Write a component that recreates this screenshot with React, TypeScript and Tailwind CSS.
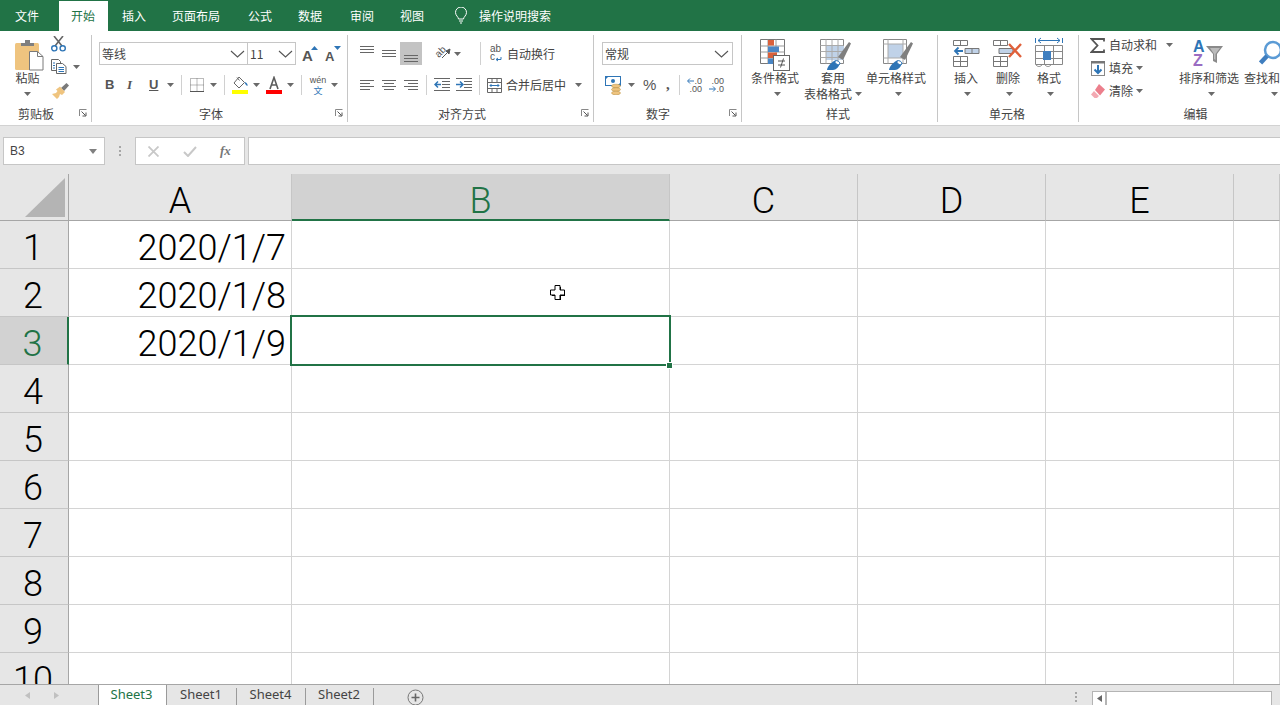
import React from "react";

const CJK = "font-['Noto_Sans_CJK_SC','Noto_Sans',sans-serif]";

function Caret({ className = "" }: { className?: string }) {
  return (
    <svg width="7" height="4" viewBox="0 0 7 4" className={"shrink-0 " + className}>
      <path d="M0 0h7L3.5 4z" fill="#6a6a6a" />
    </svg>
  );
}

function Chevron() {
  return (
    <svg width="15" height="8" viewBox="0 0 15 8" className="shrink-0">
      <path d="M1 1l6.5 6L14 1" fill="none" stroke="#555" strokeWidth="1.1" />
    </svg>
  );
}

function Launcher() {
  return (
    <svg width="8" height="8" viewBox="0 0 8 8" className="absolute right-[4px] top-[5px]">
      <path d="M.5 7V.5H7.5" fill="none" stroke="#888" />
      <path d="M2.5 2.5L6.5 6.5M7 3.5V7H3.5" fill="none" stroke="#555" />
    </svg>
  );
}

function Sep() {
  return <div className="w-px h-[87px] mt-[4px] bg-[#c6c6c6] shrink-0" />;
}

function VSep({ ml, mr }: { ml: string; mr?: string }) {
  return <div className={"w-px h-[20px] bg-[#d0d0d0] shrink-0 " + ml + " " + (mr ?? "")} />;
}

function Label({ text, pad }: { text: string; pad: string }) {
  return (
    <div className={"relative h-[20px] flex justify-center items-center text-[12px] text-[#444] " + pad}>
      <span>{text}</span>
    </div>
  );
}

function Paste() {
  return (
    <svg width="29" height="31" viewBox="0 0 29 31">
      <rect x="0" y="3" width="24" height="27" rx="1.5" fill="#efc47f" />
      <path d="M6 6V3h4V0h5v3h4v3z" fill="#7f7f7f" />
      <path d="M14.5 11.5h8l5.5 5v13.5h-13.5z" fill="#fff" stroke="#7a7a7a" />
      <path d="M22.5 11.5v5h5.5" fill="none" stroke="#7a7a7a" />
    </svg>
  );
}

function Scissors() {
  return (
    <svg width="15" height="16" viewBox="0 0 15 16">
      <path d="M3 0l8 10M12 0L4 10" stroke="#666" strokeWidth="1.6" fill="none" />
      <circle cx="3.3" cy="12.3" r="2.6" fill="none" stroke="#2e75b6" strokeWidth="1.4" />
      <circle cx="11.7" cy="12.3" r="2.6" fill="none" stroke="#2e75b6" strokeWidth="1.4" />
    </svg>
  );
}

function Copy() {
  return (
    <svg width="16" height="15" viewBox="0 0 16 15">
      <path d="M.5.5h7l2 2v9H.5z" fill="#fff" stroke="#666" />
      <path d="M5.5 4.5h6l3.5 3v7H5.5z" fill="#fff" stroke="#666" />
      <path d="M2 4h2M2 6.5h2M2 9h2" stroke="#2e75b6" />
      <path d="M7.5 8.5h5.5M7.5 10.5h5.5M7.5 12.5h5.5" stroke="#2e75b6" />
    </svg>
  );
}

function Brush() {
  return (
    <svg width="17" height="16" viewBox="0 0 17 16">
      <path d="M9 5l3 3 5-5.500L14.500 0z" fill="#7a7a7a" />
      <path d="M8 3.500L13 9l-3 3-2-1-1 3-2 2-5-5 4-1 1.500-2L4 6.500z" fill="#efc47f" />
    </svg>
  );
}

function Grow({ up }: { up: boolean }) {
  return (
    <span className="relative flex w-[16px] h-[20px] items-end justify-start text-[#555] font-['Liberation_Sans',sans-serif] font-bold">
      <span className={up ? "text-[15px] leading-[16px]" : "text-[13px] leading-[14px]"}>A</span>
      <svg width="7" height="4" viewBox="0 0 7 4" className="absolute right-0 top-[2px]">
        <path d={up ? "M0 4h7L3.500 0z" : "M0 0h7L3.500 4z"} fill="#2e75b6" />
      </svg>
    </span>
  );
}

function Borders() {
  return (
    <svg width="14" height="14" viewBox="0 0 14 14">
      <path d="M.5.5h13v13H.5zM7 .5v13M.5 7h13" fill="none" stroke="#777" strokeDasharray="1 1" />
      <path d="M0 13.500h14" stroke="#555" />
    </svg>
  );
}

function Fill() {
  return (
    <svg width="17" height="18" viewBox="0 0 17 18">
      <path d="M7 1l5.500 5.500L7 12 2 7z" fill="#fff" stroke="#666" />
      <path d="M12.500 6c2 .5 3.500 2 3 4-1.500-.5-2.500-2-3-4z" fill="#2e75b6" />
      <path d="M5 1.500l2.500 3" stroke="#666" />
      <rect x="0" y="14" width="16" height="4" fill="#ffff00" />
    </svg>
  );
}

function FontColor() {
  return (
    <svg width="16" height="18" viewBox="0 0 16 18">
      <path d="M4 13L8 1.500 12 13M5.500 9h5" fill="none" stroke="#5c5c5c" strokeWidth="1.600" />
      <rect x="0" y="14" width="16" height="4" fill="#ff0000" />
    </svg>
  );
}

function Lines({ kind }: { kind: "l" | "c" | "r" }) {
  const d = {
    l: "M0 1.500h14M0 4.500h10M0 7.500h14M0 10.500h10",
    c: "M0 1.500h14M2 4.500h10M0 7.500h14M2 10.500h10",
    r: "M0 1.500h14M4 4.500h10M0 7.500h14M4 10.500h10",
  }[kind];
  return (
    <svg width="14" height="12" viewBox="0 0 14 12">
      <path d={d} stroke="#666" fill="none" />
    </svg>
  );
}

function VAlign({ y }: { y: number }) {
  return (
    <svg width="14" height="10" viewBox="0 0 14 10" style={{ marginTop: y }}>
      <path d="M0 1.500h14M0 4.500h14M0 7.500h14" stroke="#666" fill="none" />
    </svg>
  );
}

function Orient() {
  return (
    <span className="relative block w-[17px] h-[15px] text-[#555]">
      <span className="absolute left-[1px] top-[-1px] text-[10px] leading-[14px] rotate-[-45deg] font-['Liberation_Sans',sans-serif]">ab</span>
      <svg width="17" height="15" viewBox="0 0 17 15" className="absolute left-0 top-0">
        <path d="M8 12l6-6M16 3l-1 5-3-3z" stroke="#555" fill="#555" />
      </svg>
    </span>
  );
}

function Wrap() {
  return (
    <span className="relative flex flex-col w-[12px] h-[17px] text-[10px] leading-[8px] text-[#555] font-['Liberation_Sans',sans-serif]">
      <span>ab</span>
      <span>c</span>
      <svg width="12" height="17" viewBox="0 0 12 17" className="absolute left-0 top-0">
        <path d="M11 12v2.500H6.500M8 13l-2 1.500L8 16" stroke="#2e75b6" fill="none" />
      </svg>
    </span>
  );
}

function Indent({ dir }: { dir: "l" | "r" }) {
  return dir === "l" ? (
    <svg width="16" height="14" viewBox="0 0 16 14">
      <path d="M0 .5h16M8 3.500h8M8 6.500h8M8 9.500h8M0 12.500h16" stroke="#666" fill="none" />
      <path d="M7 6.500H1M4 3.500l-3 3 3 3" stroke="#2e75b6" strokeWidth="1.500" fill="none" />
    </svg>
  ) : (
    <svg width="16" height="14" viewBox="0 0 16 14">
      <path d="M0 .5h16M8 3.500h8M8 6.500h8M8 9.500h8M0 12.500h16" stroke="#666" fill="none" />
      <path d="M0 6.500h6M4 3.500l3 3-3 3" stroke="#2e75b6" strokeWidth="1.500" fill="none" />
    </svg>
  );
}

function Merge() {
  return (
    <svg width="15" height="15" viewBox="0 0 15 15">
      <path d="M.5.5h14v14H.5zM.5 4.500h14M.5 10.500h14M5 .5v4M10 .5v4M5 10.500v4M10 10.500v4" stroke="#666" fill="#fff" />
      <path d="M3 7.500h9M4.500 6l-1.500 1.500L4.500 9M10.500 6L12 7.500 10.500 9" stroke="#2e75b6" fill="none" />
    </svg>
  );
}

function Accounting() {
  return (
    <svg width="18" height="19" viewBox="0 0 18 19">
      <rect x=".5" y=".5" width="15" height="9" fill="#fff" stroke="#2e75b6" />
      <circle cx="8" cy="5" r="2" fill="#2e75b6" />
      <path d="M0 0h4L0 4zM16 10h-4l4-4z" fill="#2e75b6" />
      <ellipse cx="11" cy="10" rx="4.500" ry="1.800" fill="#efc47f" stroke="#b58a3a" strokeWidth=".5" />
      <ellipse cx="11" cy="13.500" rx="4.500" ry="1.800" fill="#efc47f" stroke="#b58a3a" strokeWidth=".5" />
      <ellipse cx="11" cy="17" rx="4.500" ry="1.800" fill="#efc47f" stroke="#b58a3a" strokeWidth=".5" />
    </svg>
  );
}

function Decimal({ more }: { more: boolean }) {
  return (
    <span className="relative flex flex-col items-end w-[15px] h-[16px] text-[9px] leading-[8px] text-[#555] font-['Liberation_Sans',sans-serif]">
      {more ? (
        <>
          <span>.0</span>
          <span>.00</span>
          <svg width="7" height="6" viewBox="0 0 7 6" className="absolute left-0 top-[1px]">
            <path d="M7 3H1M3 .5L.5 3 3 5.500" stroke="#2e75b6" fill="none" />
          </svg>
        </>
      ) : (
        <>
          <span>.00</span>
          <span>.0</span>
          <svg width="7" height="6" viewBox="0 0 7 6" className="absolute left-0 top-[9px]">
            <path d="M0 3h6M4 .5L6.500 3 4 5.500" stroke="#2e75b6" fill="none" />
          </svg>
        </>
      )}
    </span>
  );
}

function Cond() {
  return (
    <svg width="30" height="32" viewBox="0 0 30 32">
      <path d="M.5.5h24v24H.5z" fill="#fff" stroke="#777" />
      <path d="M8 .5v24M16 .5v24M.5 7h24M.5 13h24M.5 19h24" stroke="#999" fill="none" />
      <path d="M8 1h6v5.500H8z" fill="#d9603b" />
      <path d="M8 7.500h11V13H8z" fill="#4a86c5" />
      <path d="M8 13.500h9V19H8z" fill="#d9603b" />
      <path d="M8 19.500h5V25H8z" fill="#4a86c5" />
      <rect x="13.500" y="16.500" width="16" height="15" fill="#fff" stroke="#666" />
      <path d="M18 22h7M18 26h7M23.500 19.500l-3 9" stroke="#555" fill="none" />
    </svg>
  );
}

function TableFmt() {
  return (
    <svg width="31" height="32" viewBox="0 0 31 32">
      <path d="M.5.5h23v24H.5z" fill="#fff" stroke="#888" />
      <path d="M6 7h18v14H6z" fill="#c0d2e8" />
      <path d="M6 .5v24M12 .5v24M18 .5v24M.5 6.500h23M.5 12.500h23M.5 18.500h23" stroke="#aaa" fill="none" />
      <path d="M18 18L29 3l2 1.500L23 21z" fill="#7f7f7f" />
      <path d="M7 31c.5-4 4-7 7-9 2-1 5 0 6 2-1 4-4 7-7 7z" fill="#2e75b6" />
      <path d="M15 22a3.500 3.500 0 0 1 5 3l-2 1-3-2z" fill="#fff" stroke="#2e75b6" />
    </svg>
  );
}

function CellStyle() {
  return (
    <svg width="30" height="32" viewBox="0 0 30 32">
      <path d="M.5.5h23v24H.5z" fill="#fff" stroke="#888" />
      <path d="M5 5h15v14H5z" fill="#c0d2e8" />
      <path d="M.5 5h23M.5 19h23M5 .5v24M20 .5v24" stroke="#aaa" fill="none" />
      <path d="M17 18L28 3l2 1.500L22 21z" fill="#7f7f7f" />
      <path d="M6 31c.5-4 4-7 7-9 2-1 5 0 6 2-1 4-4 7-7 7z" fill="#2e75b6" />
      <path d="M14 22a3.500 3.500 0 0 1 5 3l-2 1-3-2z" fill="#fff" stroke="#2e75b6" />
    </svg>
  );
}

function Insert() {
  return (
    <svg width="27" height="27" viewBox="0 0 27 27">
      <path d="M.5.5h14v5H.5zM7.500.5v5M.5 16.500h14v10H.5zM7.500 16.500v10M.5 21.500h14" fill="#fff" stroke="#777" />
      <path d="M12 8.500h14v5H12z" fill="#c0d2e8" stroke="#777" />
      <path d="M19 8.500v5" stroke="#777" />
      <path d="M10 11H2M5.500 7.500L2 11l3.500 3.500" stroke="#2e75b6" strokeWidth="1.800" fill="none" />
    </svg>
  );
}

function Delete() {
  return (
    <svg width="30" height="27" viewBox="0 0 30 27">
      <path d="M.5.5h14v5H.5zM7.500.5v5M.5 16.500h14v10H.5zM7.500 16.500v10M.5 21.500h14" fill="#fff" stroke="#777" />
      <path d="M6 8.500h14v5H6z" fill="#c0d2e8" stroke="#777" />
      <path d="M16 4l12 13M28 4L16 17" stroke="#e0603a" strokeWidth="2.400" fill="none" />
    </svg>
  );
}

function Format() {
  return (
    <svg width="28" height="31" viewBox="0 0 28 31">
      <path d="M.5 1v5M27.500 1v5M3 3.500h22M6 1l-3 2.500L6 6M22 1l3 2.500L22 6" stroke="#2e75b6" fill="none" />
      <path d="M.5 8.500h27v19H.5zM9.500 8.500v19M18.500 8.500v19M.5 14.500h27M.5 21.500h27" fill="#fff" stroke="#888" />
      <rect x="8" y="14" width="8" height="9" fill="#3f7ebf" />
      <path d="M1 28c2 2 4 2 6 0M10 28c2 2 4 2 6 0" stroke="#888" fill="none" />
    </svg>
  );
}

function Sigma() {
  return (
    <svg width="15" height="15" viewBox="0 0 15 15" className="shrink-0">
      <path d="M14 3.500V1H1.500l6 6.500-6 6.500H14v-2.500" fill="none" stroke="#555" strokeWidth="1.800" />
    </svg>
  );
}

function FillDown() {
  return (
    <svg width="14" height="15" viewBox="0 0 14 15" className="shrink-0">
      <rect x=".5" y=".5" width="13" height="14" fill="#fff" stroke="#888" />
      <path d="M0 0h14v2.500H0z" fill="#777" />
      <path d="M7 4v8M3.500 8.500L7 12l3.500-3.500" stroke="#2e75b6" strokeWidth="2" fill="none" />
    </svg>
  );
}

function Eraser() {
  return (
    <svg width="14" height="14" viewBox="0 0 14 14" className="shrink-0">
      <path d="M8 0l6 5.500-5 6L4 6z" fill="#ec7f8c" />
      <path d="M3 7l5 5-2 2H3.500L0 10.500z" fill="#f3a9b2" />
    </svg>
  );
}

function Sort() {
  return (
    <span className="relative flex flex-col w-[31px] h-[28px] font-['Liberation_Sans',sans-serif] font-bold text-[16px] leading-[14px]">
      <span className="text-[#2e75b6]">A</span>
      <span className="text-[#9a6cc2]">Z</span>
      <svg width="31" height="28" viewBox="0 0 31 28" className="absolute left-0 top-0">
        <path d="M13 6h17l-6 8v9l-4-2v-7z" fill="#8a8a8a" />
        <path d="M17 8h10l-4.500 6v6l-1.500-1v-5z" fill="#bbb" />
      </svg>
    </span>
  );
}

function Find() {
  return (
    <svg width="22" height="32" viewBox="0 0 22 32">
      <circle cx="14" cy="11" r="8" fill="#fff" stroke="#5b9bd5" strokeWidth="2.500" />
      <path d="M8 17L1.500 24" stroke="#3f7ebf" strokeWidth="4.500" />
    </svg>
  );
}

function BigButton({
  w,
  ml,
  icon,
  line1,
  line2,
  caretShift,
  textClass,
  iconClass,
}: {
  w: string;
  ml: string;
  icon: React.ReactNode;
  line1: string;
  line2?: React.ReactNode;
  caretShift?: string;
  textClass?: string;
  iconClass?: string;
}) {
  return (
    <div className={"flex flex-col items-center shrink-0 " + w + " " + ml}>
      <div className={"h-[31px] flex items-start justify-center " + (iconClass ?? "")}>{icon}</div>
      <div className={"text-[12px] leading-[16px] text-[#444] whitespace-nowrap " + (textClass ?? "")}>{line1}</div>
      {line2 ?? <Caret className={"mt-[6px] " + (caretShift ?? "")} />}
    </div>
  );
}

function Ribbon() {
  return (
    <div className={"h-[94px] bg-white flex border-b border-[#d2d2d2] box-content shrink-0 " + CJK}>
      {/* clipboard */}
      <div className="w-[91px] shrink-0 flex flex-col">
        <div className="h-[73px] flex">
          <div className="w-[51px] flex flex-col items-center pl-[2px]">
            <div className="mt-[9px] ml-[6px] h-[30px]">
              <Paste />
            </div>
            <div className="text-[12px] leading-[16px] text-[#444] ml-[2px]">粘贴</div>
            <Caret className="mt-[6px] ml-[2px]" />
          </div>
          <div className="flex flex-col pt-[5px]">
            <Scissors />
            <div className="flex items-center mt-[7px]">
              <Copy />
              <Caret className="ml-[6px]" />
            </div>
            <div className="mt-[9px] ml-[1px]">
              <Brush />
            </div>
          </div>
        </div>
        <div className="relative">
          <Label text="剪贴板" pad="pr-[19px]" />
          <Launcher />
        </div>
      </div>
      <Sep />
      {/* font */}
      <div className="w-[255px] shrink-0 flex flex-col">
        <div className="h-[73px] pt-[11px] pl-[7px]">
          <div className="flex items-center h-[23px]">
            <div className="w-[149px] h-[23px] border border-[#c6c6c6] flex items-center justify-between pl-[2px] pr-[2px] text-[12px] text-[#444]">
              <span>等线</span>
              <Chevron />
            </div>
            <div className="w-[49px] h-[23px] border border-[#c6c6c6] -ml-px flex items-center justify-between pl-[2px] pr-[2px] text-[12px] text-[#444]">
              <span>11</span>
              <Chevron />
            </div>
            <div className="ml-[6px]">
              <Grow up />
            </div>
            <div className="ml-[7px]">
              <Grow up={false} />
            </div>
          </div>
          <div className="flex items-center h-[20px] mt-[10px] font-['Liberation_Sans',sans-serif] text-[13px] text-[#555]">
            <span className="ml-[6px] w-[9px] font-bold">B</span>
            <span className="ml-[13px] w-[9px] italic font-['Liberation_Serif',serif] font-bold">I</span>
            <span className="ml-[13px] w-[9px] font-bold underline">U</span>
            <Caret className="ml-[9px]" />
            <VSep ml="ml-[7px]" />
            <div className="ml-[8px]">
              <Borders />
            </div>
            <Caret className="ml-[6px]" />
            <VSep ml="ml-[7px]" />
            <div className="ml-[7px]">
              <Fill />
            </div>
            <Caret className="ml-[4px]" />
            <div className="ml-[6px]">
              <FontColor />
            </div>
            <Caret className="ml-[5px]" />
            <VSep ml="ml-[7px]" />
            <div className="ml-[8px] flex flex-col items-center w-[16px] gap-[2px]">
              <span className="text-[9px] leading-[8px] text-[#555]">wén</span>
              <span className={"text-[9px] leading-[9px] text-[#2e75b6] " + CJK}>文</span>
            </div>
            <Caret className="ml-[5px]" />
          </div>
        </div>
        <div className="relative">
          <Label text="字体" pad="pr-[17px]" />
          <Launcher />
        </div>
      </div>
      <Sep />
      {/* alignment */}
      <div className="w-[245px] shrink-0 flex flex-col">
        <div className="h-[73px] pt-[11px] pl-[12px]">
          <div className="flex items-center h-[23px]">
            <div className="w-[14px] flex items-start h-[23px]">
              <VAlign y={3} />
            </div>
            <div className="w-[14px] ml-[8px] flex items-start h-[23px]">
              <VAlign y={7} />
            </div>
            <div className="w-[22px] h-[23px] ml-[4px] bg-[#c3c3c3] flex justify-center items-start">
              <VAlign y={12} />
            </div>
            <div className="ml-[12px]">
              <Orient />
            </div>
            <Caret className="ml-[3px]" />
            <div className="w-px h-[23px] bg-[#d0d0d0] ml-[19px]" />
            <div className="ml-[9px]">
              <Wrap />
            </div>
            <span className="ml-[5px] text-[12px] text-[#444]">自动换行</span>
          </div>
          <div className="flex items-center h-[20px] mt-[10px]">
            <div>
              <Lines kind="l" />
            </div>
            <div className="ml-[8px]">
              <Lines kind="c" />
            </div>
            <div className="ml-[8px]">
              <Lines kind="r" />
            </div>
            <VSep ml="ml-[8px]" />
            <div className="ml-[7px]">
              <Indent dir="l" />
            </div>
            <div className="ml-[6px]">
              <Indent dir="r" />
            </div>
            <div className="w-px h-[20px] bg-[#d0d0d0] ml-[7px]" />
            <div className="ml-[7px]">
              <Merge />
            </div>
            <span className="ml-[4px] text-[12px] text-[#444]">合并后居中</span>
            <Caret className="ml-[9px]" />
          </div>
        </div>
        <div className="relative">
          <Label text="对齐方式" pad="pr-[17px]" />
          <Launcher />
        </div>
      </div>
      <Sep />
      {/* number */}
      <div className="w-[147px] shrink-0 flex flex-col">
        <div className="h-[73px] pt-[11px] pl-[8px]">
          <div className="w-[131px] h-[23px] border border-[#c6c6c6] flex items-center justify-between pl-[2px] pr-[3px] text-[12px] text-[#444]">
            <span>常规</span>
            <Chevron />
          </div>
          <div className="flex items-center h-[20px] mt-[10px]">
            <div className="ml-[3px]">
              <Accounting />
            </div>
            <Caret className="ml-[5px]" />
            <span className="ml-[8px] w-[14px] text-[15px] font-['Liberation_Sans',sans-serif] text-[#555]">%</span>
            <span className="ml-[9px] w-[6px] text-[15px] font-['Liberation_Serif',serif] font-bold text-[#555] -mt-[2px]">,</span>
            <VSep ml="ml-[7px]" />
            <div className="ml-[7px]">
              <Decimal more />
            </div>
            <div className="ml-[7px]">
              <Decimal more={false} />
            </div>
          </div>
        </div>
        <div className="relative">
          <Label text="数字" pad="pr-[19px]" />
          <Launcher />
        </div>
      </div>
      <Sep />
      {/* styles */}
      <div className="w-[195px] shrink-0 flex flex-col">
        <div className="h-[73px] flex pt-[8px]">
          <BigButton w="w-[48px]" ml="ml-[9px]" icon={<Cond />} line1="条件格式" caretShift="ml-[4px]" />
          <BigButton
            w="w-[48px]"
            ml="ml-[5px]"
            icon={<TableFmt />}
            iconClass="ml-[14px]"
            line1="套用"
            textClass="ml-[10px]"
            line2={
              <div className="flex items-center text-[12px] leading-[16px] text-[#444] whitespace-nowrap">
                <span>表格格式</span>
                <Caret className="ml-[3px] -mr-[10px]" />
              </div>
            }
          />
          <BigButton w="w-[60px]" ml="ml-[14px]" icon={<CellStyle />} iconClass="ml-[4px]" line1="单元格样式" caretShift="ml-[4px]" />
        </div>
        <Label text="样式" pad="pr-[3px]" />
      </div>
      <Sep />
      {/* cells */}
      <div className="w-[140px] shrink-0 flex flex-col">
        <div className="h-[73px] flex pt-[8px]">
          <BigButton w="w-[28px]" ml="ml-[14px]" icon={<Insert />} iconClass="pt-[1px]" line1="插入" caretShift="ml-[3px]" />
          <BigButton w="w-[30px]" ml="ml-[13px]" icon={<Delete />} iconClass="pt-[1px]" line1="删除" caretShift="ml-[2px]" />
          <BigButton
            w="w-[28px]"
            ml="ml-[12px]"
            icon={
              <div className="-mt-[2px]">
                <Format />
              </div>
            }
            line1="格式"
            caretShift="ml-[2px]"
          />
        </div>
        <Label text="单元格" pad="pr-[2px]" />
      </div>
      <Sep />
      {/* editing */}
      <div className="w-[201px] shrink-0 flex flex-col overflow-hidden">
        <div className="h-[73px] flex pt-[6px]">
          <div className="w-[90px] pl-[11px] shrink-0 flex flex-col text-[12px] text-[#444] whitespace-nowrap">
            <div className="flex items-center h-[16px]">
              <Sigma />
              <span className="ml-[4px]">自动求和</span>
              <Caret className="ml-[9px]" />
            </div>
            <div className="flex items-center h-[16px] mt-[7px]">
              <div className="ml-[1px]">
                <FillDown />
              </div>
              <span className="ml-[4px]">填充</span>
              <Caret className="ml-[3px]" />
            </div>
            <div className="flex items-center h-[16px] mt-[7px]">
              <div className="ml-[1px]">
                <Eraser />
              </div>
              <span className="ml-[4px]">清除</span>
              <Caret className="ml-[3px]" />
            </div>
          </div>
          <div className="w-[60px] ml-[10px] shrink-0 flex flex-col items-center pt-[3px]">
            <div className="h-[30px] ml-[-1px]">
              <Sort />
            </div>
            <div className="text-[12px] leading-[16px] text-[#444] whitespace-nowrap">排序和筛选</div>
            <Caret className="mt-[6px] ml-[4px]" />
          </div>
          <div className="w-[36px] ml-[5px] shrink-0 flex flex-col pt-[2px]">
            <div className="h-[31px] ml-[15px]">
              <Find />
            </div>
            <div className="text-[12px] leading-[16px] text-[#444] whitespace-nowrap">查找和选择</div>
            <Caret className="mt-[6px] ml-[27px]" />
          </div>
        </div>
        <Label text="编辑" pad="pl-[32px]" />
      </div>
    </div>
  );
}

function FormulaBar() {
  return (
    <div className="h-[48px] bg-[#e6e6e6] flex pt-[11px] pl-[3px] items-start shrink-0 font-['Liberation_Sans',sans-serif]">
      <div className="w-[102px] h-[28px] bg-white border border-[#c6c6c6] flex items-center justify-between pl-[6px] pr-[7px] text-[12px] text-[#444]">
        <span>B3</span>
        <svg width="8" height="5" viewBox="0 0 8 5">
          <path d="M0 0h8L4 5z" fill="#808080" />
        </svg>
      </div>
      <div className="w-[30px] h-[28px] flex flex-col items-center justify-center gap-[2px]">
        <span className="w-[2px] h-[2px] bg-[#a6a6a6]" />
        <span className="w-[2px] h-[2px] bg-[#a6a6a6]" />
        <span className="w-[2px] h-[2px] bg-[#a6a6a6]" />
      </div>
      <div className="w-[110px] h-[28px] bg-white border border-[#c6c6c6] flex items-center">
        <svg width="11" height="11" viewBox="0 0 11 11" className="ml-[12px]">
          <path d="M.5.5l10 10M10.500.5l-10 10" stroke="#c8c8c8" strokeWidth="1.800" />
        </svg>
        <svg width="14" height="11" viewBox="0 0 14 11" className="ml-[24px]">
          <path d="M1 6l4 4 8-9" stroke="#c8c8c8" strokeWidth="2" fill="none" />
        </svg>
        <span className="ml-[23px] font-['Liberation_Serif',serif] italic font-bold text-[13px] text-[#777]">fx</span>
      </div>
      <div className="flex-1 h-[28px] ml-[3px] bg-white border border-[#c6c6c6] border-r-0" />
    </div>
  );
}

const COLS = [
  { name: "A", w: "w-[223px]" },
  { name: "B", w: "w-[378px]" },
  { name: "C", w: "w-[188px]" },
  { name: "D", w: "w-[188px]" },
  { name: "E", w: "w-[188px]" },
  { name: "", w: "flex-1" },
];

const DATA: Record<number, string> = { 1: "2020/1/7", 2: "2020/1/8", 3: "2020/1/9" };
const BIG = "font-['Roboto',sans-serif] font-light text-[36px] text-black";

function Grid() {
  return (
    <div className={"relative flex-1 overflow-hidden bg-white " + BIG}>
      <div className="flex h-[47px]">
        <div className="w-[69px] shrink-0 bg-[#e6e6e6] border-r border-b border-[#a6a6a6] flex items-end justify-end pr-[3px] pb-[3px]">
          <svg width="40" height="39" viewBox="0 0 40 39">
            <path d="M40 0v39H0z" fill="#b4b4b4" />
          </svg>
        </div>
        {COLS.map((c) => (
          <div
            key={c.name}
            className={
              c.w +
              " leading-[54px] text-center h-[47px] border-r " +
              (c.name === "B"
                ? "bg-[#d2d2d2] border-b-2 border-b-[#217346] border-r-[#c6c6c6] text-[#217346]"
                : "bg-[#e6e6e6] border-b border-b-[#a6a6a6] border-r-[#c6c6c6]")
            }
          >
            {c.name}
          </div>
        ))}
      </div>
      {[1, 2, 3, 4, 5, 6, 7, 8, 9, 10].map((r) => (
        <div key={r} className="flex h-[48px]">
          <div
            className={
              "w-[69px] shrink-0 border-b border-b-[#c6c6c6] text-center pr-[2px] leading-[55px] h-[48px] " +
              (r === 3
                ? "bg-[#d2d2d2] border-r-2 border-r-[#217346] text-[#217346]"
                : "bg-[#e6e6e6] border-r border-r-[#a6a6a6]")
            }
          >
            {r}
          </div>
          {COLS.map((c) => (
            <div
              key={c.name}
              className={c.w + " h-[48px] border-r border-b border-[#d4d4d4] text-right pr-[5px] leading-[55px]"}
            >
              {c.name === "A" ? DATA[r] : null}
            </div>
          ))}
        </div>
      ))}
      {/* selection */}
      <div className="absolute left-[290px] top-[141px] w-[381px] h-[51px] border-2 border-[#217346]" />
      <div className="absolute left-[666px] top-[188px] w-[5px] h-[5px] bg-[#217346] border border-white box-content" />
      {/* cursor */}
      <svg width="16" height="16" viewBox="0 0 16 16" className="absolute left-[550px] top-[111px]">
        <path d="M5 1h5v4h4v5h-4v4H5v-4H1V5h4z" fill="#000" transform="translate(1 1)" />
        <path d="M5 .5h5v4.500h4.500v5H10v4.500H5V10H.5V5H5z" fill="#fff" stroke="#000" />
      </svg>
    </div>
  );
}

function Tabs() {
  return (
    <div className="h-[21px] shrink-0 bg-[#e6e6e6] border-t border-[#a6a6a6] flex items-start font-['Noto_Sans',sans-serif] text-[13px] text-[#444]">
      <div className="w-[99px] h-[20px] flex items-center border-r border-[#9a9a9a] shrink-0">
        <svg width="5" height="7" viewBox="0 0 5 7" className="ml-[25px]">
          <path d="M5 0v7L0 3.500z" fill="#c0c0c0" />
        </svg>
        <svg width="5" height="7" viewBox="0 0 5 7" className="ml-[24px]">
          <path d="M0 0v7l5-3.500z" fill="#c0c0c0" />
        </svg>
      </div>
      <div className="w-[68px] h-[20px] pr-[2px] bg-white text-[#217346] flex items-center justify-center border-r border-[#9a9a9a] shrink-0">
        Sheet3
      </div>
      {[
        { t: "Sheet1", w: "w-[70px]" },
        { t: "Sheet4", w: "w-[69px]" },
        { t: "Sheet2", w: "w-[68px]" },
      ].map(({ t, w }) => (
        <div key={t} className={w + " h-[20px] pr-[2px] flex items-center justify-center shrink-0 relative"}>
          {t}
          <span className="absolute right-0 top-[3px] h-[17px] w-px bg-[#9a9a9a]" />
        </div>
      ))}
      <svg width="17" height="17" viewBox="0 0 17 17" className="ml-[33px] mt-[4px] shrink-0">
        <circle cx="8.500" cy="8.500" r="7.500" fill="none" stroke="#777" />
        <path d="M8.500 4.500v8M4.500 8.500h8" stroke="#666" strokeWidth="1.600" />
      </svg>
      <div className="ml-[651px] mt-[7px] flex flex-col gap-[2px] shrink-0">
        <span className="w-[2px] h-[2px] bg-[#a6a6a6]" />
        <span className="w-[2px] h-[2px] bg-[#a6a6a6]" />
        <span className="w-[2px] h-[2px] bg-[#a6a6a6]" />
      </div>
      <div className="ml-[15px] mt-[6px] w-[180px] h-[15px] bg-white border border-[#b4b4b4] flex shrink-0">
        <div className="w-[14px] flex items-center justify-center border-r-2 border-[#b4b4b4]">
          <svg width="5" height="7" viewBox="0 0 5 7">
            <path d="M5 0v7L0 3.500z" fill="#666" />
          </svg>
        </div>
      </div>
    </div>
  );
}

export default function App() {
  return (
    <div className={"w-[1280px] h-[705px] overflow-hidden flex flex-col bg-white " + CJK}>
      <div className="h-[31px] bg-[#217346] flex items-start text-[12px] text-white shrink-0">
        <span className="ml-[15px] leading-[31px]">文件</span>
        <span className="ml-[20px] mt-[1px] w-[49px] h-[30px] pr-[1px] bg-white text-[#217346] text-center leading-[29px]">开始</span>
        <span className="ml-[14px] leading-[31px]">插入</span>
        <span className="ml-[26px] leading-[31px]">页面布局</span>
        <span className="ml-[28px] leading-[31px]">公式</span>
        <span className="ml-[26px] leading-[31px]">数据</span>
        <span className="ml-[28px] leading-[31px]">审阅</span>
        <span className="ml-[26px] leading-[31px]">视图</span>
        <svg width="14" height="17" viewBox="0 0 14 17" className="ml-[30px] mt-[7px]">
          <path d="M4.500 12c0-2-3-3.500-3-6.500a5.500 5.500 0 0 1 11 0c0 3-3 4.500-3 6.500z" fill="none" stroke="#fff" />
          <path d="M5 14h4M6 16h2" stroke="#fff" />
        </svg>
        <span className="ml-[11px] leading-[31px]">操作说明搜索</span>
      </div>
      <Ribbon />
      <FormulaBar />
      <Grid />
      <Tabs />
    </div>
  );
}
